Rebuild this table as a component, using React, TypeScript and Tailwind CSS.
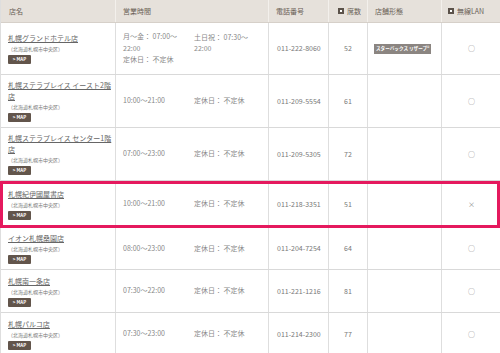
type Shop = {
  name: string[]
  hours: string[]
  hours2?: string[]
  closed?: string
  tel: string
  seats: string
  type?: string
  lan: string
  h: string
  mark?: boolean
}

const shops: Shop[] = [
  {
    name: ['札幌グランドホテル店'],
    hours: ['月〜金： 07:00〜', '22:00', '定休日： 不定休'],
    hours2: ['土日祝： 07:30〜', '22:00'],
    tel: '011-222-8060',
    seats: '52',
    type: 'スターバックス リザーブ®',
    lan: '○',
    h: 'h-[52px]',
  },
  {
    name: ['札幌ステラプレイス イースト2階', '店'],
    hours: ['10:00〜21:00'],
    closed: '定休日： 不定休',
    tel: '011-209-5554',
    seats: '61',
    lan: '○',
    h: 'h-[53px]',
  },
  {
    name: ['札幌ステラプレイス センター1階', '店'],
    hours: ['07:00〜23:00'],
    closed: '定休日： 不定休',
    tel: '011-209-5305',
    seats: '72',
    lan: '○',
    h: 'h-[53px]',
  },
  {
    name: ['札幌紀伊國屋書店'],
    hours: ['10:00〜21:00'],
    closed: '定休日： 不定休',
    tel: '011-218-3351',
    seats: '51',
    lan: '×',
    h: 'h-[47px]',
    mark: true,
  },
  {
    name: ['イオン札幌桑園店'],
    hours: ['08:00〜23:00'],
    closed: '定休日： 不定休',
    tel: '011-204-7254',
    seats: '64',
    lan: '○',
    h: 'h-[42px]',
  },
  {
    name: ['札幌南一条店'],
    hours: ['07:30〜22:00'],
    closed: '定休日： 不定休',
    tel: '011-221-1216',
    seats: '81',
    lan: '○',
    h: 'h-[43px]',
  },
  {
    name: ['札幌パルコ店'],
    hours: ['07:30〜23:00'],
    closed: '定休日： 不定休',
    tel: '011-214-2300',
    seats: '77',
    lan: '○',
    h: 'h-[43px]',
  },
]

const cols = 'grid grid-cols-[115px_153px_60px_39px_74px_59px]'

function HeadIcon() {
  return (
    <span className="w-[6px] h-[6px] bg-[#5b524a] flex items-center justify-center mr-[3px]">
      <span className="w-[2px] h-[2px] bg-white" />
    </span>
  )
}

function Row({ s }: { s: Shop }) {
  const cell = 'border-r border-[#dedede] flex items-center'
  return (
    <div className={`${cols} ${s.h} border-b border-[#d9d9d9] bg-white`}>
      <div className={`${cell} pl-[7px]`}>
        <div className="flex flex-col">
          {s.name.map((n) => (
            <span key={n} className="text-[7px] leading-[11px] text-[#666] underline underline-offset-[1px]">
              {n}
            </span>
          ))}
          <span className="text-[5px] leading-[10px] text-[#777]">（北海道札幌市中央区）</span>
          <span className="mt-[1px] w-[23px] h-[9px] rounded-[1px] bg-[#62554b] text-white text-[4.5px] font-bold flex items-center justify-center">
            &gt; MAP
          </span>
        </div>
      </div>
      <div className={`${cell} pl-[7px] text-[7px] leading-[11.5px] text-[#888]`}>
        <div className="w-[71px] flex flex-col self-center">
          {s.hours.map((x, i) => (
            <span key={i}>{x}</span>
          ))}
        </div>
        {s.hours2 ? (
          <div className="flex flex-col self-center mb-[11px]">
            {s.hours2.map((x, i) => (
              <span key={i}>{x}</span>
            ))}
          </div>
        ) : (
          <span>{s.closed}</span>
        )}
      </div>
      <div className={`${cell} pl-[8px] text-[7px] text-[#777]`}>{s.tel}</div>
      <div className={`${cell} justify-center text-[7px] text-[#777]`}>{s.seats}</div>
      <div className={`${cell} pl-[6px]`}>
        {s.type && (
          <span className="h-[10px] px-[2px] bg-[#8b8581] text-white text-[4.6px] font-bold flex items-center whitespace-nowrap">
            {s.type}
          </span>
        )}
      </div>
      <div className="flex items-center justify-center text-[7px] text-[#888]">{s.lan}</div>
    </div>
  )
}

export default function App() {
  return (
    <div className="w-[500px] h-[353px] overflow-hidden bg-white font-['Noto_Sans_CJK_JP',sans-serif]">
      <div className="border-l border-[#dedede]">
        <div className={`${cols} h-[23px] bg-[#e6e1db] text-[7px] text-[#6a5f56] border-b border-[#d6d0c9]`}>
          <div className="flex items-center pl-[8px] border-r border-[#f3f0ec]">店名</div>
          <div className="flex items-center pl-[7px] border-r border-[#f3f0ec]">営業時間</div>
          <div className="flex items-center pl-[7px] border-r border-[#f3f0ec]">電話番号</div>
          <div className="flex items-center pl-[9px] border-r border-[#f3f0ec]">
            <HeadIcon />
            席数
          </div>
          <div className="flex items-center pl-[7px] border-r border-[#f3f0ec]">店舗形態</div>
          <div className="flex items-center pl-[6px]">
            <HeadIcon />
            無線LAN
          </div>
        </div>
        {shops.map((s) =>
          s.mark ? (
            <div key={s.tel} className="relative">
              <Row s={s} />
              <div className="absolute inset-0 -left-px border-[3px] border-[#e5195e]" />
            </div>
          ) : (
            <Row key={s.tel} s={s} />
          ),
        )}
      </div>
    </div>
  )
}
